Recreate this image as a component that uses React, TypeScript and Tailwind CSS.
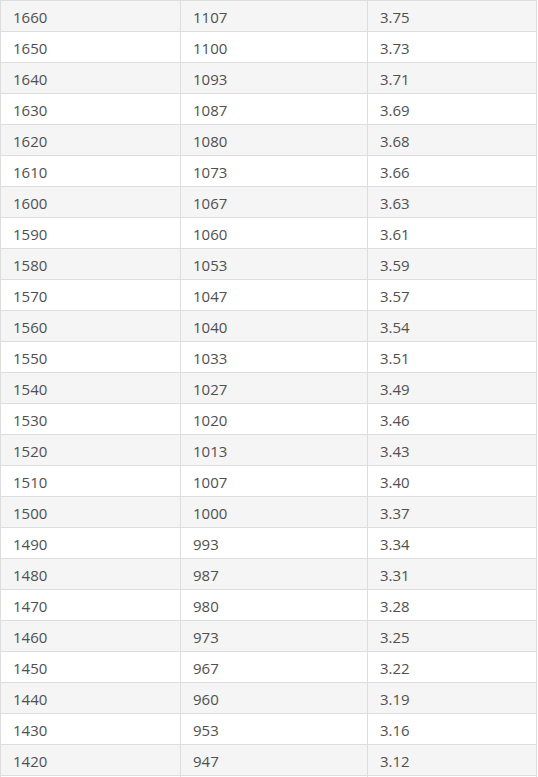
const rows: [string, string, string][] = [
  ["1660", "1107", "3.75"],
  ["1650", "1100", "3.73"],
  ["1640", "1093", "3.71"],
  ["1630", "1087", "3.69"],
  ["1620", "1080", "3.68"],
  ["1610", "1073", "3.66"],
  ["1600", "1067", "3.63"],
  ["1590", "1060", "3.61"],
  ["1580", "1053", "3.59"],
  ["1570", "1047", "3.57"],
  ["1560", "1040", "3.54"],
  ["1550", "1033", "3.51"],
  ["1540", "1027", "3.49"],
  ["1530", "1020", "3.46"],
  ["1520", "1013", "3.43"],
  ["1510", "1007", "3.40"],
  ["1500", "1000", "3.37"],
  ["1490", "993", "3.34"],
  ["1480", "987", "3.31"],
  ["1470", "980", "3.28"],
  ["1460", "973", "3.25"],
  ["1450", "967", "3.22"],
  ["1440", "960", "3.19"],
  ["1430", "953", "3.16"],
  ["1420", "947", "3.12"],
  ["", "", ""],
];

const App = () => {
  return (
    <div className="w-[538px] h-[777px] overflow-hidden bg-white font-['Open_Sans',sans-serif]">
      <table className="w-[537px] border-collapse table-fixed text-[15px] text-[#505050]">
        <colgroup>
          <col className="w-[180px]" />
          <col className="w-[187px]" />
          <col />
        </colgroup>
        <tbody>
          {rows.map((r, i) => (
            <tr key={i} className={i % 2 === 0 ? "bg-[#f5f5f5]" : "bg-white"}>
              {r.map((v, j) => (
                <td
                  key={j}
                  className="h-[31px] border border-[#ddd] pl-3 pt-[2px] leading-none align-middle"
                >
                  {v}
                </td>
              ))}
            </tr>
          ))}
        </tbody>
      </table>
    </div>
  );
};

export default App;
